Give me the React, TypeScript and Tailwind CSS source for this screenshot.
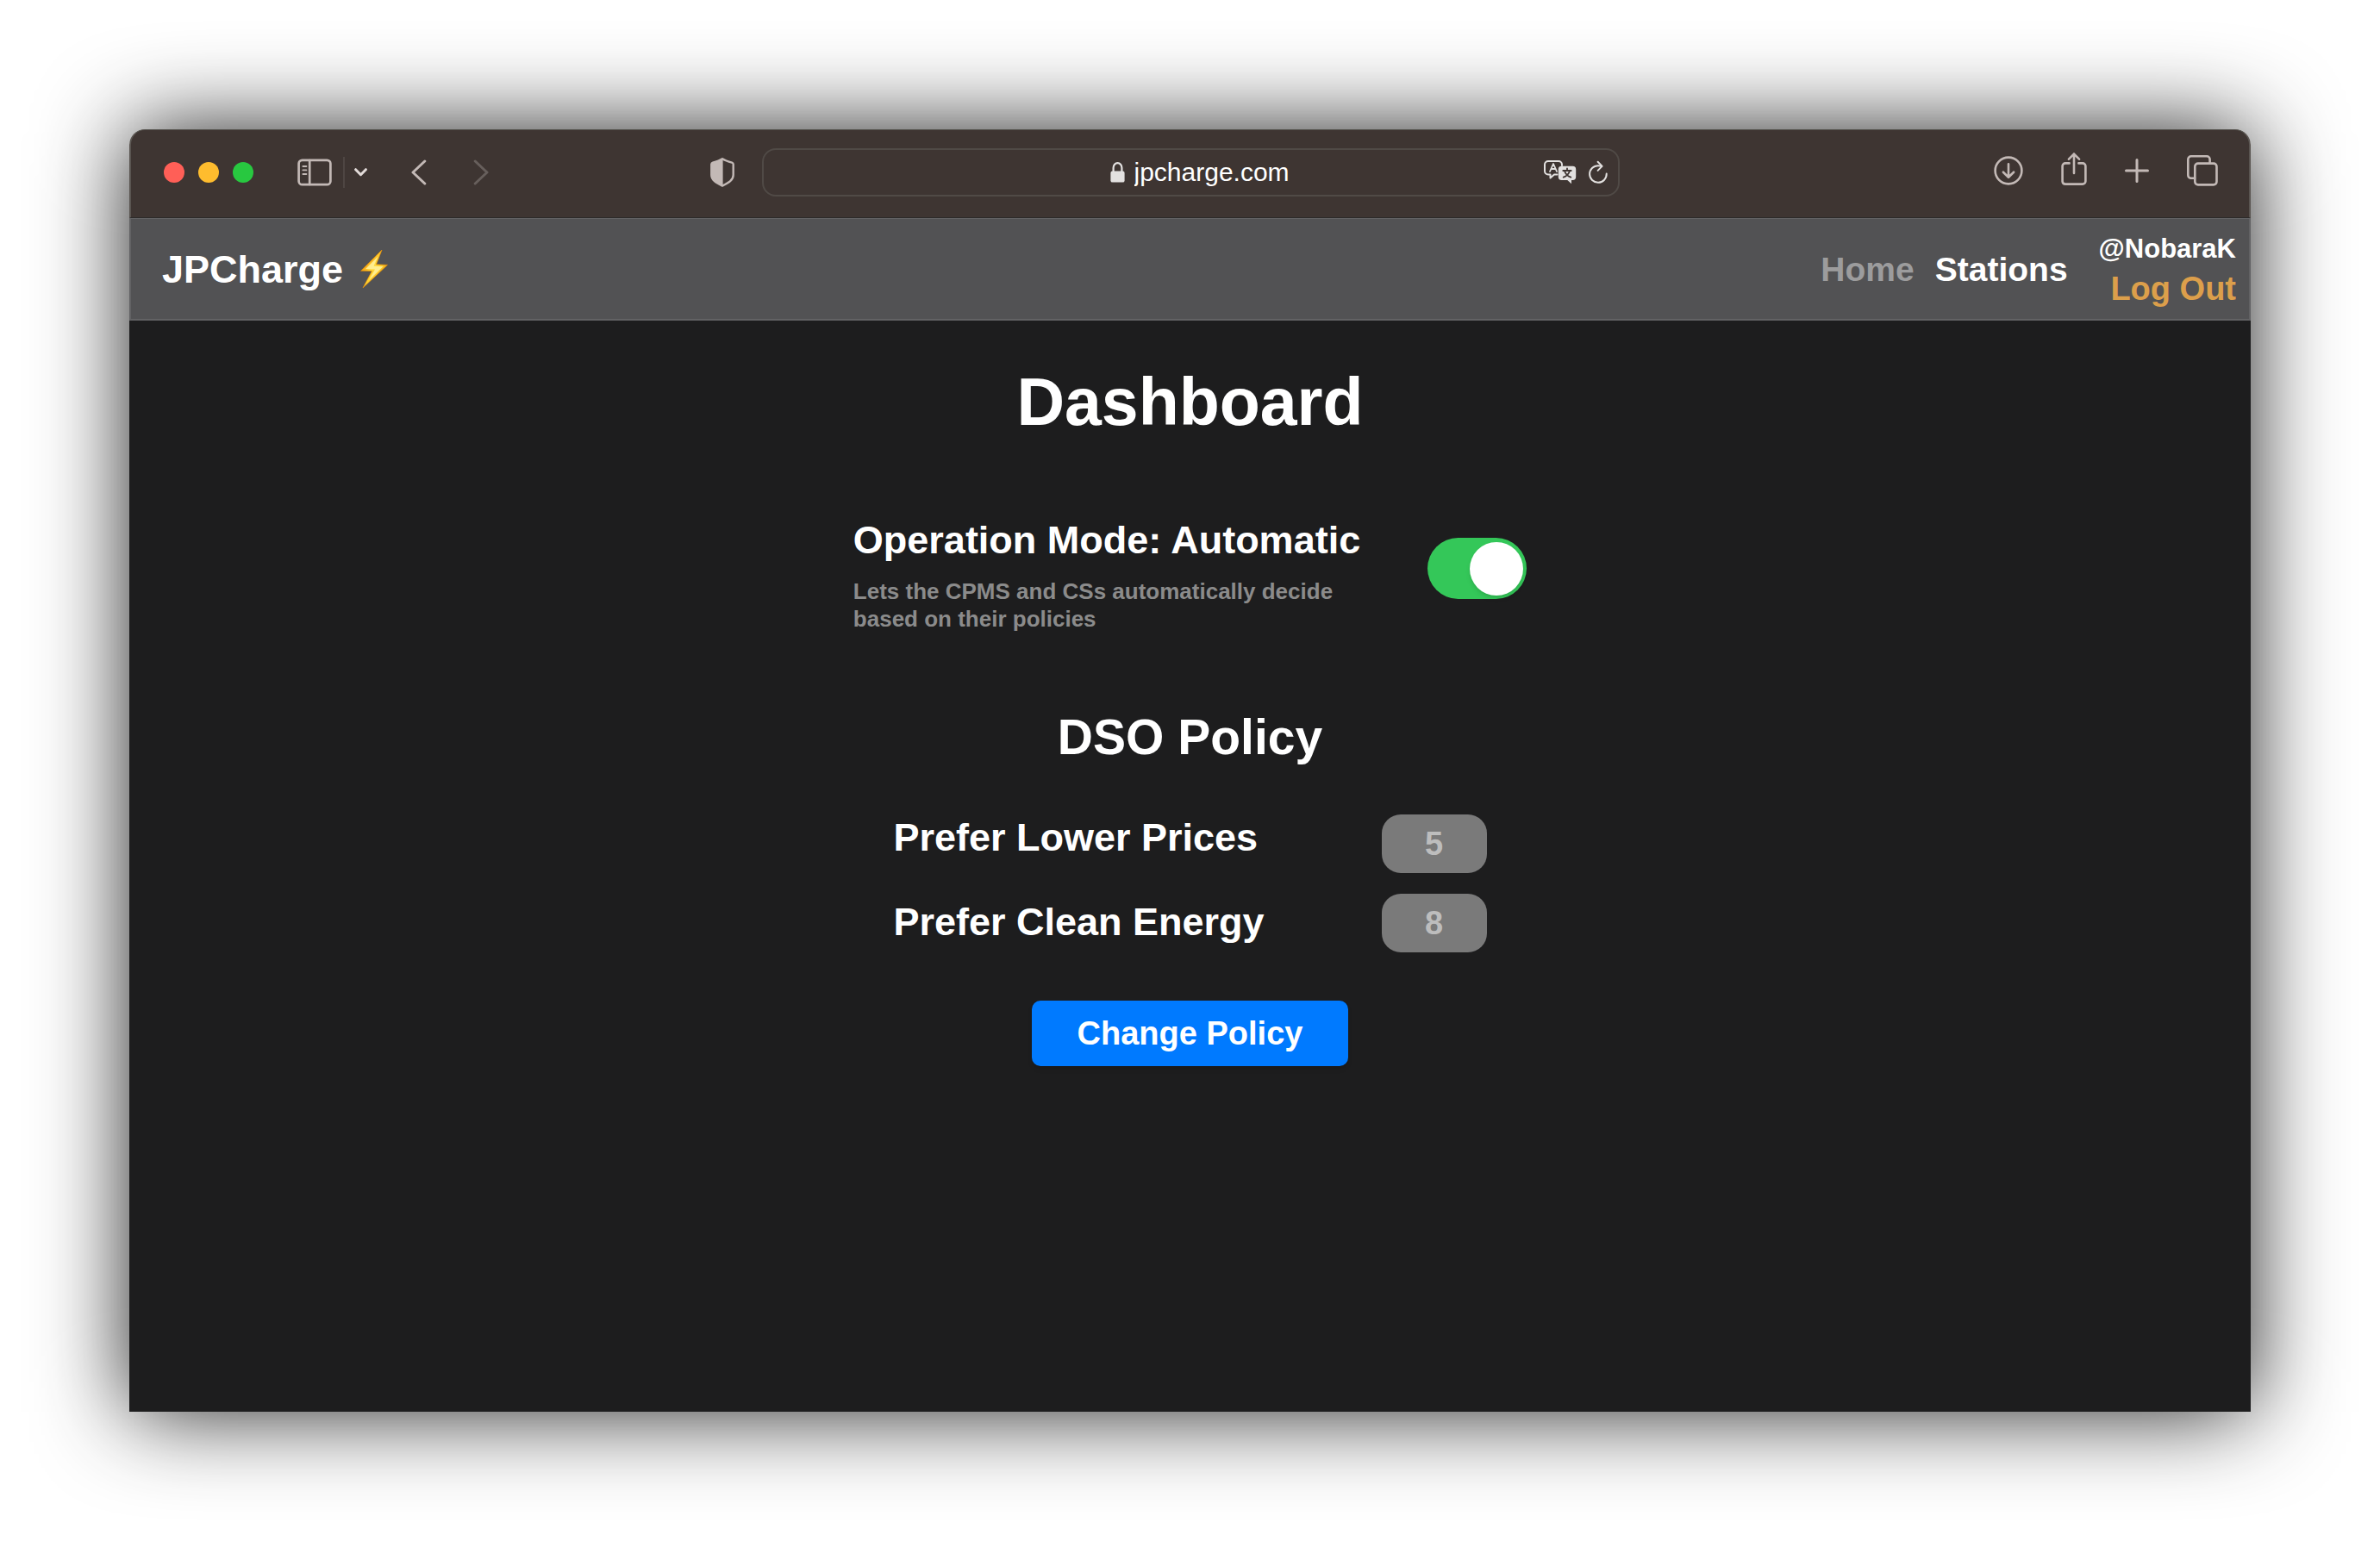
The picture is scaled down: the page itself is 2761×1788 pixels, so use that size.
import React from "react";

const stroke = {
  fill: "none",
  stroke: "currentColor",
  strokeLinecap: "round" as const,
  strokeLinejoin: "round" as const,
};

function SidebarIcon() {
  return (
    <svg width="40" height="32" viewBox="0 0 40 32" {...stroke} strokeWidth="2.7" aria-hidden="true">
      <rect x="1.6" y="1.8" width="36.8" height="28.4" rx="4" />
      <path d="M14.2 2v28" />
      <path d="M6.4 9h4M6.4 13.4h4M6.4 18h4" strokeWidth="1.9" />
    </svg>
  );
}

function LockIcon() {
  return (
    <svg width="17" height="24" viewBox="0 0 17 24" aria-hidden="true">
      <path d="M3.6 12V6.800a4.900 5.600 0 0 1 9.800 0V12" fill="none" stroke="currentColor" strokeWidth="2.200" />
      <rect x="0.4" y="10.6" width="16.2" height="13" rx="2.2" fill="currentColor" />
    </svg>
  );
}

function ShieldIcon() {
  return (
    <svg width="28" height="34" viewBox="0 0 28 34" aria-hidden="true">
      <path
        d="M14 1.300c2.600 1.600 6.700 3.100 11.100 4.300 1.100.300 1.600.900 1.600 2V20c0 6-5.200 8.800-12.700 12.600C6.500 28.800 1.300 26 1.300 20V7.600c0-1.100.5-1.700 1.600-2C7.300 4.400 11.400 2.900 14 1.300z"
        fill="none"
        stroke="currentColor"
        strokeWidth="2.400"
        strokeLinejoin="round"
      />
      <path d="M14.600 1v32C6.500 29 1.300 26 1.300 20V7c0-1 .5-1.400 1.600-1.700C7.300 4.200 11.400 2.700 14.600 1z" fill="currentColor" />
    </svg>
  );
}

function TranslateIcon() {
  return (
    <svg width="38" height="28" viewBox="0 0 38 28" aria-hidden="true">
      <g {...stroke} strokeWidth="2">
        <path d="M15.500 16.500h-3.500l-4.500 4v-4H5a4 4 0 0 1-4-4V5a4 4 0 0 1 4-4h12a4 4 0 0 1 4 4v1" />
        <path d="M7 13l4-9 4 9M8.400 10h5.200" strokeWidth="1.800" />
      </g>
      <path
        d="M20.500 6.800h13A3.700 3.700 0 0 1 37.200 10.500v8.800a3.700 3.700 0 0 1-3.700 3.700H32v4.300L27.300 23h-6.800a3.700 3.700 0 0 1-3.700-3.700v-8.800a3.700 3.700 0 0 1 3.700-3.700z"
        fill="currentColor"
      />
      <path
        d="M27 9.400v2.200M22.300 12h9.400M24 12.300c1 3.400 3.400 6 7.300 7.300M30 12.300c-1 3.400-3.400 6-7.300 7.300"
        fill="none"
        stroke="#3e3532"
        strokeWidth="1.800"
        strokeLinecap="round"
      />
    </svg>
  );
}

function ReloadIcon() {
  return (
    <svg width="22" height="28" viewBox="0 0 22 28" {...stroke} strokeWidth="2" aria-hidden="true">
      <path d="M20.700 15.600A9.800 9.800 0 1 1 11 6.200c1.300 0 2.600.2 3.900.7" />
      <path d="M10.600 1.700l5 5.200-5 5" />
    </svg>
  );
}

function DownloadIcon() {
  return (
    <svg width="34" height="34" viewBox="0 0 34 34" {...stroke} strokeWidth="2.600" aria-hidden="true">
      <circle cx="17" cy="17" r="15.400" />
      <path d="M17 9.300v15M10.900 18.700l6.100 6 6.100-6" />
    </svg>
  );
}

function ShareIcon() {
  return (
    <svg width="30" height="38" viewBox="0 0 30 38" {...stroke} strokeWidth="2.600" aria-hidden="true">
      <path d="M9.600 12.400H5a3.400 3.400 0 0 0-3.400 3.400v17.600A3.400 3.400 0 0 0 5 36.600h20a3.400 3.400 0 0 0 3.400-3.400V15.800a3.400 3.400 0 0 0-3.400-3.400h-4.600" />
      <path d="M15 24V1.600M9 7.700l6-6.100 6 6.100" />
    </svg>
  );
}

function PlusIcon() {
  return (
    <svg width="28" height="28" viewBox="0 0 28 28" {...stroke} strokeWidth="3" aria-hidden="true">
      <path d="M14 1.500v25M1.500 14h25" />
    </svg>
  );
}

function TabsIcon() {
  return (
    <svg width="36" height="36" viewBox="0 0 36 36" {...stroke} strokeWidth="2.600" aria-hidden="true">
      <rect x="9.300" y="9.600" width="25.200" height="24.800" rx="3.600" />
      <path d="M9 26.800H4.900a3.600 3.600 0 0 1-3.600-3.600V4.900a3.600 3.600 0 0 1 3.600-3.600H23a3.600 3.600 0 0 1 3.600 3.600v4.400" />
    </svg>
  );
}

function BoltIcon() {
  return (
    <svg width="32" height="46" viewBox="0 0 32 46" role="img" aria-label="lightning bolt">
      <defs>
        <linearGradient id="bolt" x1="0" y1="0" x2="1" y2="1">
          <stop offset="0.250" stopColor="#f29a0c" />
          <stop offset="0.450" stopColor="#ffd83a" />
          <stop offset="0.600" stopColor="#ffcf2e" />
          <stop offset="0.800" stopColor="#e88a00" />
        </linearGradient>
      </defs>
      <path d="M25 1L0.600 25.300l12.800.3L3 45 31.500 18.400l-13-.6z" fill="url(#bolt)" stroke="#e48d08" strokeWidth="0.700" />
      <path d="M20.500 8.500L6 23l11 .4L10 36 26.500 20.200l-11-.4z" fill="#fff3a0" opacity="0.850" />
    </svg>
  );
}

function TitleBar() {
  return (
    <header className="grid grid-cols-[1fr_minmax(0,995px)_1fr] items-center rounded-t-[18px] border-x-2 border-t border-b border-x-[#5a5551] border-t-[#55534e] border-b-[#2d2a2a] bg-[#3e3532] pt-[21px] pr-9 pb-6 pl-[38px] text-[#c3b9b6]">
      <div className="flex items-center">
        <div className="flex gap-4">
          <button aria-label="Close" className="size-6 rounded-full bg-[#ff5f57]" />
          <button aria-label="Minimize" className="size-6 rounded-full bg-[#febc2e]" />
          <button aria-label="Zoom" className="size-6 rounded-full bg-[#28c840]" />
        </div>
        <button aria-label="Show sidebar" className="ml-[51px]">
          <SidebarIcon />
        </button>
        <span className="ml-[13px] h-9 w-0.5 bg-[#4e4643]" />
        <button aria-label="Tab groups" className="ml-[11px] text-[#e2dbd9]">
          <svg width="15" height="10" viewBox="0 0 15 10" {...stroke} strokeWidth="3" aria-hidden="true">
            <path d="M1.600 1.700l5.900 6 5.900-6" />
          </svg>
        </button>
        <button aria-label="Back" className="ml-[51px]">
          <svg width="18" height="30" viewBox="0 0 18 30" {...stroke} strokeWidth="3" aria-hidden="true">
            <path d="M15.800 2L2 15l13.800 13" />
          </svg>
        </button>
        <button aria-label="Forward" className="ml-[54px] text-[#675f5c]">
          <svg width="18" height="30" viewBox="0 0 18 30" {...stroke} strokeWidth="3" aria-hidden="true">
            <path d="M2.200 2L16 15 2.200 28" />
          </svg>
        </button>
        <button aria-label="Privacy report" className="mr-8 ml-auto">
          <ShieldIcon />
        </button>
      </div>
      <div className="flex h-14 items-center rounded-2xl border-2 border-[#504a46] pr-3 pl-9 text-[#e3e1e0]">
        <div className="flex-1" />
        <LockIcon />
        <input
          aria-label="Address"
          defaultValue="jpcharge.com"
          className="ml-[11px] w-[184px] bg-transparent text-[30px] leading-9 text-white outline-none"
        />
        <div className="flex flex-1 items-center justify-end gap-3.5">
          <button aria-label="Translate">
            <TranslateIcon />
          </button>
          <button aria-label="Reload">
            <ReloadIcon />
          </button>
        </div>
      </div>
      <div className="flex items-center justify-end gap-11 pb-1">
        <button aria-label="Downloads">
          <DownloadIcon />
        </button>
        <button aria-label="Share" className="pb-1">
          <ShareIcon />
        </button>
        <button aria-label="New tab">
          <PlusIcon />
        </button>
        <button aria-label="Show tabs">
          <TabsIcon />
        </button>
      </div>
    </header>
  );
}

function NavBar() {
  return (
    <nav className="flex items-center justify-between border-2 border-t border-[#626264] bg-[#525254] pr-[15px] pl-9 font-bold text-white">
      <a href="#" className="flex items-center gap-5 text-[45px] leading-[54px]">
        <span className="pt-0.5">JPCharge</span>
        <BoltIcon />
      </a>
      <div className="flex items-center text-[39px]">
        <a href="#home" className="pt-0.5 text-[#9c9c9d]">
          Home
        </a>
        <a href="#stations" className="ml-6 pt-0.5">
          Stations
        </a>
        <div className="ml-9 flex h-[116px] flex-col items-end justify-center">
          <span className="text-[31px] leading-[46px]">@NobaraK</span>
          <button className="text-[38px] leading-[46px] text-[#dc9f4b]">Log Out</button>
        </div>
      </div>
    </nav>
  );
}

function Dashboard() {
  return (
    <main className="flex flex-1 flex-col items-center bg-[#1d1d1e] pt-[50px] pb-10 font-bold text-white">
      <h1 className="text-[77px] leading-[88px]">Dashboard</h1>

      <section className="mt-[90px] flex items-start gap-[78px]">
        <div>
          <label htmlFor="mode" className="block text-[45px] leading-[54px]">
            Operation Mode: Automatic
          </label>
          <p className="mt-4 w-[580px] text-[26px] leading-8 text-[#8b8b8b]">
            Lets the CPMS and CSs automatically decide based on their policies
          </p>
        </div>
        <input
          id="mode"
          type="checkbox"
          role="switch"
          defaultChecked
          className="mt-6 flex h-[71px] w-[115px] appearance-none items-center rounded-full bg-[#6b6b6b] px-1 before:size-[62px] before:rounded-full before:bg-white before:shadow-md checked:justify-end checked:bg-[#34c759]"
        />
      </section>

      <section className="flex flex-col items-center">
        <h2 className="mt-[87px] text-[57px] leading-[68px]">DSO Policy</h2>
        <div className="mt-14 flex gap-[136px]">
          <div className="flex flex-col gap-11 text-[45px] leading-[54px]">
            <label htmlFor="prices">Prefer Lower Prices</label>
            <label htmlFor="energy">Prefer Clean Energy</label>
          </div>
          <div className="flex flex-col gap-6 text-[38px] text-[#bdbdbd]">
            <input
              id="prices"
              inputMode="numeric"
              defaultValue="5"
              className="h-[68px] w-[122px] rounded-[22px] bg-[#7a7a7a] text-center"
            />
            <input
              id="energy"
              inputMode="numeric"
              defaultValue="8"
              className="h-[68px] w-[122px] rounded-[22px] bg-[#7a7a7a] text-center"
            />
          </div>
        </div>
        <button className="mt-14 h-[76px] w-[367px] rounded-[10px] bg-[#007aff] text-[38px] shadow-md">
          Change Policy
        </button>
      </section>
    </main>
  );
}

export default function App() {
  return (
    <div className="flex min-h-screen bg-white p-[150px] font-['Liberation_Sans',Arial,sans-serif]">
      <div className="flex flex-1 flex-col rounded-t-[18px] shadow-[0_0_105px_rgba(0,0,0,0.870)]">
        <TitleBar />
        <NavBar />
        <Dashboard />
      </div>
    </div>
  );
}
